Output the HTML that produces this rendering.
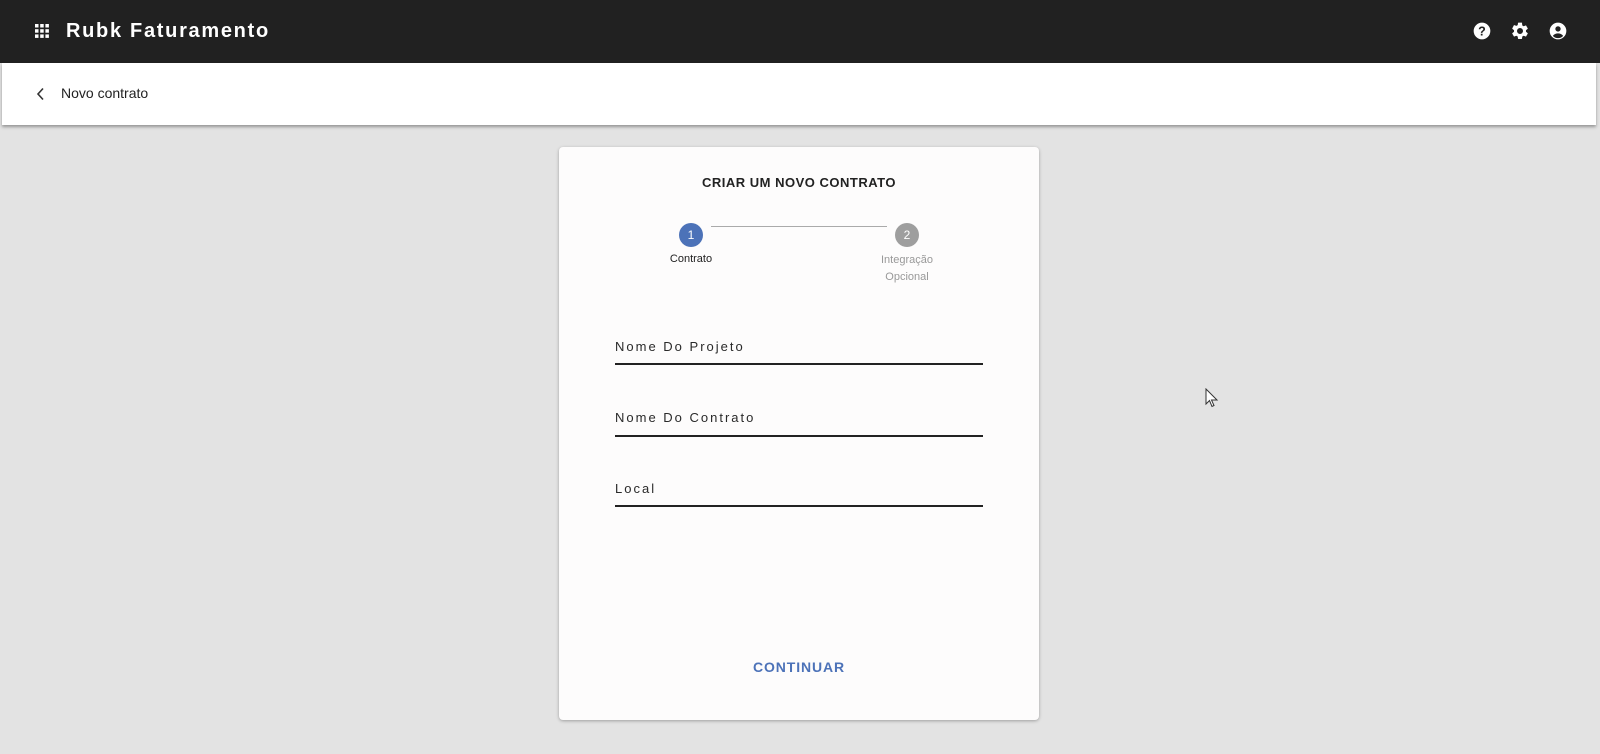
<!DOCTYPE html>
<html><head><meta charset="utf-8"><style>
*{margin:0;padding:0;box-sizing:border-box}
body{width:1600px;height:754px;overflow:hidden;background:#e3e3e3;font-family:"Liberation Sans",Arial,sans-serif;position:relative}
.top{position:absolute;left:0;top:0;width:1600px;height:63px;background:#212121}
.sub{position:absolute;left:2px;top:63px;width:1594px;height:62px;background:#fff;box-shadow:0 2px 3px rgba(0,0,0,.35)}
.abs{position:absolute}
.card{position:absolute;left:559px;top:147px;width:480px;height:573px;background:#fdfcfc;border-radius:4px;box-shadow:0 1px 3px rgba(0,0,0,.3)}
.lbl{position:absolute;left:615px;font-size:13px;letter-spacing:2px;color:#2a2a2a;line-height:16px}
.ln{position:absolute;left:615px;width:368px;height:1.5px;background:#222}
</style></head><body>
<div class="top"></div>
<svg class="abs" style="left:34px;top:24px" width="16" height="14" viewBox="0 0 16 14" fill="#fff">
<rect x="1" y="0" width="3.5" height="3.5"/><rect x="6.2" y="0" width="3.5" height="3.5"/><rect x="11.4" y="0" width="3.5" height="3.5"/>
<rect x="1" y="5.2" width="3.5" height="3.5"/><rect x="6.2" y="5.2" width="3.5" height="3.5"/><rect x="11.4" y="5.2" width="3.5" height="3.5"/>
<rect x="1" y="10.4" width="3.5" height="3.5"/><rect x="6.2" y="10.4" width="3.5" height="3.5"/><rect x="11.4" y="10.4" width="3.5" height="3.5"/></svg>
<div class="abs" style="left:66px;top:19px;color:#fff;font-weight:bold;font-size:20px;letter-spacing:1.7px;line-height:24px">Rubk Faturamento</div>
<svg class="abs" style="left:1472px;top:21px" width="20" height="20" viewBox="0 0 24 24"><circle cx="12" cy="12" r="10" fill="#fff"/><text x="12" y="17.5" text-anchor="middle" font-size="15" font-weight="bold" fill="#212121" font-family="Liberation Sans">?</text></svg>
<svg class="abs" style="left:1510px;top:21px" width="20" height="20" viewBox="0 0 24 24"><path fill="#fff" d="M19.14 12.94c.04-.3.06-.61.06-.94s-.02-.64-.07-.94l2.030-1.58a.49.49 0 00.12-.61l-1.92-3.32a.49.49 0 00-.59-.22l-2.39.96c-.5-.38-1.030-.7-1.62-.94l-.36-2.54A.48.48 0 0013.92 2h-3.84c-.24 0-.43.17-.47.41l-.36 2.54c-.59.24-1.13.57-1.62.94l-2.39-.96a.48.48 0 00-.59.22L2.74 8.87c-.12.21-.08.47.12.61l2.03 1.58c-.05.3-.09.63-.09.94s.02.64.07.94l-2.03 1.58a.49.49 0 00-.12.61l1.92 3.32c.12.22.37.29.59.22l2.39-.96c.5.38 1.03.7 1.62.94l.36 2.54c.05.24.24.41.48.41h3.84c.24 0 .44-.17.47-.41l.36-2.54c.59-.24 1.13-.56 1.62-.94l2.39.96c.22.08.47 0 .59-.22l1.92-3.32c.12-.22.07-.47-.12-.61l-2.01-1.58zM12 15.6A3.6 3.6 0 1112 8.4a3.6 3.6 0 010 7.2z"/></svg>
<svg class="abs" style="left:1548px;top:21px" width="20" height="20" viewBox="0 0 24 24"><circle cx="12" cy="12" r="10" fill="#fff"/><circle cx="12" cy="9.5" r="3.2" fill="#212121"/><path d="M5.8 17.8c1.5-2 3.8-3 6.2-3s4.7 1 6.2 3c-1.6 1.8-3.8 2.8-6.2 2.8s-4.6-1-6.2-2.8z" fill="#212121"/></svg>
<div class="sub"></div>
<svg class="abs" style="left:35px;top:87px" width="12" height="14" viewBox="0 0 12 14"><path d="M8 1.5L3 7l5 5.5" stroke="#333" stroke-width="1.6" fill="none"/></svg>
<div class="abs" style="left:61px;top:84px;font-size:14px;color:#222;line-height:18px">Novo contrato</div>
<div class="card"></div>
<div class="abs" style="left:559px;width:480px;top:175px;text-align:center;font-size:13px;font-weight:bold;letter-spacing:0.5px;color:#222;line-height:16px">CRIAR UM NOVO CONTRATO</div>
<div class="abs" style="left:711px;top:226px;width:176px;height:1px;background:#aaa"></div>
<div class="abs" style="left:679px;top:223px;width:24px;height:24px;border-radius:50%;background:#4c72b8;color:#fff;font-size:12px;text-align:center;line-height:24px">1</div>
<div class="abs" style="left:895px;top:223px;width:24px;height:24px;border-radius:50%;background:#9e9e9e;color:#fff;font-size:12px;text-align:center;line-height:24px">2</div>
<div class="abs" style="left:651px;width:80px;top:252px;text-align:center;font-size:11px;color:#222;line-height:14px">Contrato</div>
<div class="abs" style="left:867px;width:80px;top:252px;text-align:center;font-size:11px;color:#999;line-height:17px">Integração<br>Opcional</div>
<div class="lbl" style="top:339px">Nome Do Projeto</div><div class="ln" style="top:363px"></div>
<div class="lbl" style="top:410px">Nome Do Contrato</div><div class="ln" style="top:435px"></div>
<div class="lbl" style="top:481px">Local</div><div class="ln" style="top:505px"></div>
<div class="abs" style="left:559px;width:480px;top:659px;text-align:center;font-size:14px;font-weight:bold;letter-spacing:0.9px;color:#4c72b8;line-height:16px">CONTINUAR</div>
<svg class="abs" style="left:1205px;top:388px" width="14" height="20" viewBox="0 0 14 20"><path d="M1 1v15l3.5-3.5 2.5 6 2-1-2.5-5.5H12z" fill="#fff" stroke="#333" stroke-width="1"/></svg>
</body></html>
